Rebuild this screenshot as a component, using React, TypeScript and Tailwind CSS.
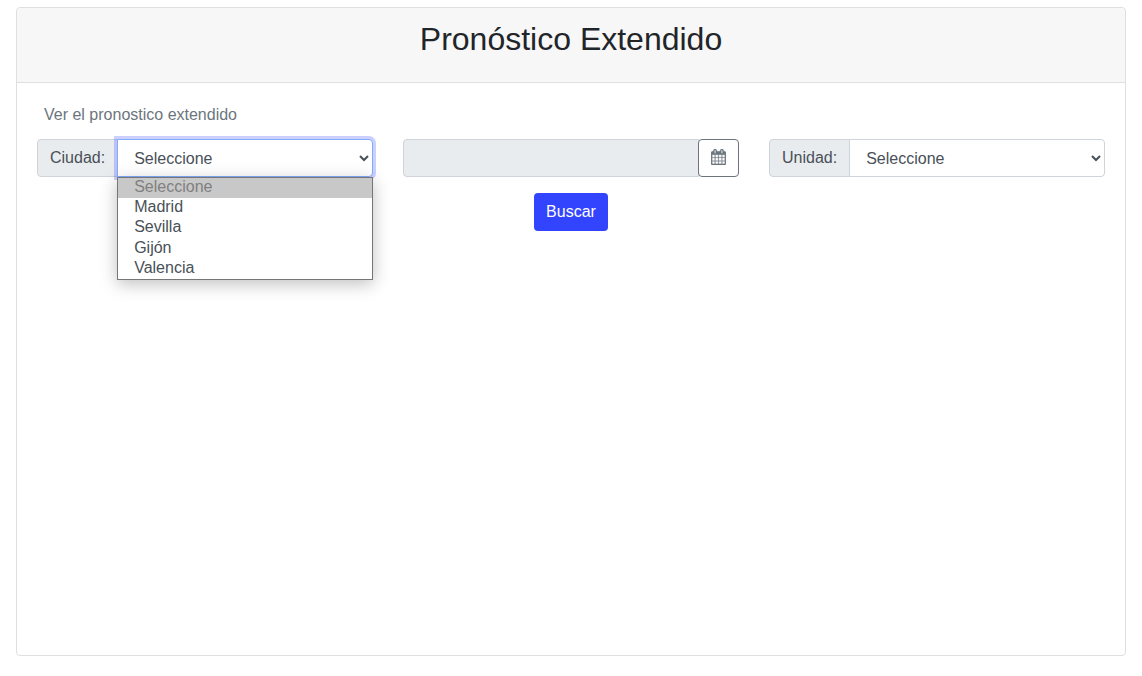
import { useState } from "react";

const CITIES = ["Seleccione", "Madrid", "Sevilla", "Gijón", "Valencia"];
const UNITS = ["Seleccione", "Celsius", "Fahrenheit"];

const ADDON =
  "flex items-center rounded-l border border-[#ced4da] bg-[#e9ecef] px-3 text-[#495057]";
const SELECT =
  "block h-[38px] w-full min-w-0 rounded-r border bg-white px-3 py-1.5 text-[#495057] outline-none";

function CalendarIcon() {
  return (
    <svg
      className="h-4 w-[15px]"
      viewBox="64 0 1664 1792"
      fill="currentColor"
      stroke="currentColor"
      strokeWidth="24"
      aria-hidden="true"
    >
      <path d="M192 1664h288v-288h-288v288zm352 0h320v-288h-320v288zm-352-352h288v-320h-288v320zm352 0h320v-320h-320v320zm-352-384h288v-288h-288v288zm736 736h320v-288h-320v288zm-384-736h320v-288h-320v288zm768 736h288v-288h-288v288zm-384-352h320v-320h-320v320zm-352-864v-288q0-13-9.5-22.5t-22.5-9.5h-64q-13 0-22.5 9.5t-9.5 22.5v288q0 13 9.5 22.5t22.5 9.5h64q13 0 22.5-9.5t9.5-22.5zm736 864h288v-320h-288v320zm-384-384h320v-288h-320v288zm384 0h288v-288h-288v288zm32-480v-288q0-13-9.5-22.5t-22.5-9.5h-64q-13 0-22.5 9.5t-9.5 22.5v288q0 13 9.5 22.5t22.5 9.5h64q13 0 22.5-9.5t9.5-22.5zm384-64v1280q0 52-38 90t-90 38h-1408q-52 0-90-38t-38-90v-1280q0-52 38-90t90-38h128v-96q0-66 47-113t113-47h64q66 0 113 47t47 113v96h384v-96q0-66 47-113t113-47h64q66 0 113 47t47 113v96h128q52 0 90 38t38 90z" />
    </svg>
  );
}

function CityField() {
  const [open, setOpen] = useState(true);
  const [city, setCity] = useState(CITIES[0]);

  return (
    <div className="flex">
      <label htmlFor="city" className={ADDON}>
        Ciudad:
      </label>
      <div className="relative z-10 -ml-px min-w-0 flex-1">
        <select
          id="city"
          value={city}
          onChange={(e) => setCity(e.target.value)}
          onMouseDown={(e) => {
            e.preventDefault();
            setOpen(!open);
          }}
          className={`${SELECT} ${
            open
              ? "border-[#80adff] shadow-[0_0_0_3px_rgba(51,68,255,0.25)]"
              : "border-[#ced4da]"
          }`}
        >
          {CITIES.map((name) => (
            <option key={name}>{name}</option>
          ))}
        </select>
        {open && (
          <ul
            role="listbox"
            aria-label="Ciudad"
            className="absolute inset-x-0 top-full grid h-[103px] grid-rows-5 border border-[#767676] bg-white leading-[18px] text-[#495057] shadow-[0_4px_16px_rgba(0,0,0,0.25)]"
          >
            {CITIES.map((name, i) => (
              <li
                key={name}
                role="option"
                aria-selected={name === city}
                aria-disabled={i === 0}
                onClick={() => {
                  if (i === 0) return;
                  setCity(name);
                  setOpen(false);
                }}
                className={i === 0 ? "bg-[#c8c8c8] px-4 text-[#808080]" : "px-4 hover:bg-gray-200"}
              >
                {name}
              </li>
            ))}
          </ul>
        )}
      </div>
    </div>
  );
}

export default function App() {
  return (
    <div className="flex min-h-screen flex-col bg-white px-4 pt-[7px] pb-5 font-['Liberation_Sans',Arial,sans-serif] text-base text-[#212529]">
      <main className="flex-1 rounded border border-[#dfdfdf] bg-white">
        <header className="rounded-t border-b border-[#dfdfdf] bg-[#f7f7f7] px-5 pt-3 pb-6">
          <h2 className="text-center text-[32px] leading-[38px]">Pronóstico Extendido</h2>
        </header>
        <form className="p-5" onSubmit={(e) => e.preventDefault()}>
          <p className="mb-3 px-[7px] text-[#6c757d]">Ver el pronostico extendido</p>
          <div className="grid grid-cols-3 gap-[30px]">
            <CityField />
            <div className="flex">
              <input
                type="text"
                readOnly
                aria-label="Fecha"
                className="h-[38px] min-w-0 flex-1 rounded-l border border-[#ced4da] bg-[#e9ecef] px-3 py-1.5 text-[#495057] outline-none"
              />
              <button
                type="button"
                aria-label="Abrir calendario"
                className="-ml-px flex h-[38px] items-start rounded border border-[#6c757d] bg-white px-3 pt-[9px] text-[#6c757d]"
              >
                <CalendarIcon />
              </button>
            </div>
            <div className="flex">
              <label htmlFor="unit" className={ADDON}>
                Unidad:
              </label>
              <div className="-ml-px min-w-0 flex-1">
                <select id="unit" className={`${SELECT} border-[#ced4da]`}>
                  {UNITS.map((name) => (
                    <option key={name}>{name}</option>
                  ))}
                </select>
              </div>
            </div>
          </div>
          <div className="mt-4 flex justify-center">
            <button
              type="submit"
              className="h-[38px] rounded bg-[#3344ff] px-3 text-white hover:bg-[#1f31f0]"
            >
              Buscar
            </button>
          </div>
        </form>
      </main>
    </div>
  );
}
